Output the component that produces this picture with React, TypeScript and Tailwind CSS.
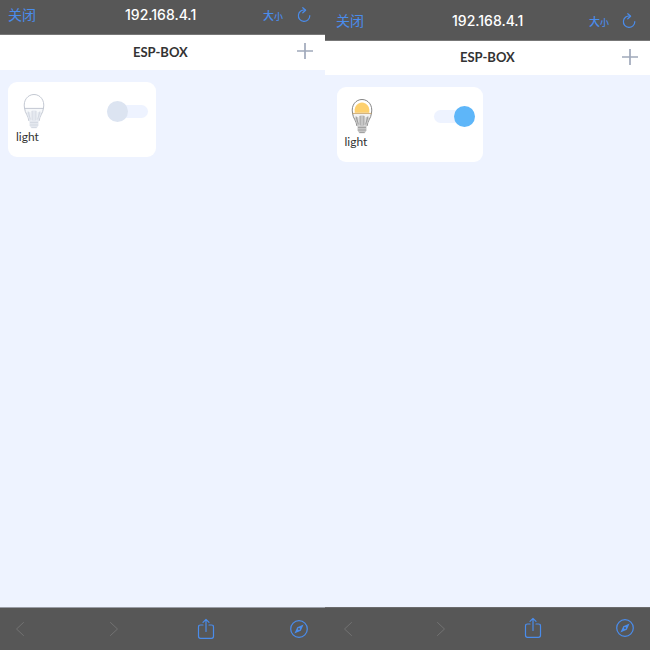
function Refresh() {
  return (
    <svg className="block h-4 w-4 shrink-0" viewBox="0 0 16 16" fill="none" stroke="#4a8ceb" strokeWidth="1.200" strokeLinecap="round" strokeLinejoin="round">
      <path d="M9.200 3.100A5.700 5.700 0 1 0 13.800 8.700" />
      <path d="M6.800 .7l2.800 2.500-2.800 2.600" />
    </svg>
  );
}

function Bulb({ on }: { on: boolean }) {
  const line = on ? "#777" : "#bcc2cd";
  const body = on ? "#c6c6c6" : "#e4e8ef";
  const fin = on ? "#929292" : "#cfd4de";
  return (
    <svg className="block h-9 w-6" viewBox="0 0 24 36" fill="none">
      <path d="M2.500 15C1.700 13 2 11 2 10a10 9 0 0 1 20 0c0 2-.3 3.500-.8 5z" fill="#fff" />
      {on && <path d="M4.900 14.800a7.400 8 0 1 1 14.200 0z" fill="#fdd06e" />}
      <path d="M2.500 15.500h19c-.8 4-3.200 6.500-4.200 12.500l-1.800 1H8.500l-1.800-1C5.700 22 3.300 19.500 2.500 15.500z" fill={on ? "#f2f2f2" : "#f6f8fa"} />
      <path d="M7 28c-.8-6-4-7.500-4.500-13C1 7 6 1.500 12 1.500S23 7 21.500 15c-.5 5.500-3.700 7-4.500 13" stroke={line} strokeWidth=".9" />
      <path d="M2.600 15.400h18.800" stroke={on ? "#cba362" : line} strokeWidth=".9" />
      <path d="M6 18.500l2.500 1V28h-1L5 21zM18 18.500l-2.500 1V28h1l2.500-7zM9.800 17.500h4.400V28H9.800z" fill={body} />
      <path d="M6 18.500l2.500 8M18 18.500l-2.500 8M10 18v9M14 18v9" stroke={fin} strokeWidth=".8" />
      <path d="M7.500 27.500h9v5l-1.800 2.800H9.300l-1.800-2.800z" fill={body} />
      <path d="M8 29.500h8M8 32h8M9.500 34.500h5" stroke={fin} strokeWidth=".7" />
    </svg>
  );
}

function Chevron({ right = false }: { right?: boolean }) {
  return (
    <svg className="block h-4 w-2.5" viewBox="0 0 10 16" fill="none" stroke="#727272" strokeWidth="1" strokeLinecap="round" strokeLinejoin="round">
      <path d={right ? "M1.500 1.500L8.500 8l-7 6.500" : "M8.500 1.500L1.500 8l7 6.500"} />
    </svg>
  );
}

function Share() {
  return (
    <svg className="block h-[22px] w-[18px]" viewBox="0 0 18 22" fill="none" stroke="#4a8ceb" strokeWidth="1.200" strokeLinecap="round" strokeLinejoin="round">
      <path d="M6 7H3.500Q1.500 7 1.500 9v9.300q0 2 2 2h11q2 0 2-2V9q0-2-2-2H12M9 13.500V1.500M6 4.300l3-3 3 3" />
    </svg>
  );
}

function Compass() {
  return (
    <svg className="block h-5 w-5" viewBox="0 0 20 20" fill="none" stroke="#4a8ceb" strokeWidth="1.250">
      <circle cx="10" cy="10" r="8.300" />
      <path fillRule="evenodd" d="M14.600 5.400L8.300 8.200l-2.900 6.400 6.400-2.900zM11 10a1 1 0 1 1-2 0 1 1 0 0 1 2 0z" fill="#4a8ceb" stroke="none" />
    </svg>
  );
}

function Phone({ on }: { on: boolean }) {
  return (
    <section className="flex h-[650px] w-[325px] flex-col overflow-hidden bg-[#eef3ff]">
      <header className={`flex shrink-0 items-start border-b border-[#777] bg-[#575757] text-[#4a8ceb] ${on ? "h-[41px] pt-[13px] pl-[11px]" : "h-[35px] pt-[7px] pl-2"}`}>
        <span className="-mt-px w-7 font-['Noto_Sans_CJK_SC',sans-serif] text-[14px] leading-4 font-normal whitespace-nowrap">关闭</span>
        <span className={`w-[72px] font-[Inter,sans-serif] text-[14px] leading-4 font-medium whitespace-nowrap text-white ${on ? "ml-[88px]" : "ml-[89px]"}`}>192.168.4.1</span>
        <span className={`flex w-5 items-baseline font-['Noto_Sans_CJK_SC',sans-serif] font-medium whitespace-nowrap ${on ? "ml-[65px]" : "ml-[66px]"}`}>
          <span className="text-[11px] leading-4">大</span><span className="text-[9px] leading-3">小</span>
        </span>
        <div className={on ? "ml-3" : "ml-[13px]"}><Refresh /></div>
      </header>
      <div className={`flex shrink-0 items-center bg-white pb-[2px] ${on ? "h-[34px] pl-[135px]" : "h-[35px] pl-[133px]"}`}>
        <h1 className="w-14 font-[Lato,sans-serif] text-[13px] leading-4 font-bold whitespace-nowrap text-[#333]">ESP-BOX</h1>
        <svg className={`block h-[18px] w-[18px] ${on ? "ml-[105px]" : "-mt-px ml-[106.500px]"}`} viewBox="0 0 18 18" fill="none" stroke="#a0a9bb" strokeWidth="1.700">
          <path d="M9 1v16M1 9h16" />
        </svg>
      </div>
      <main className={`flex-1 ${on ? "pt-3 pl-[11.500px]" : "pt-[11.500px] pl-2"}`}>
        <div className={`flex items-start justify-between rounded-[9px] bg-white pr-2 pl-2 ${on ? "h-[75px] w-[146px] pt-[11px]" : "h-[75.500px] w-[148px] pt-[11.500px]"}`}>
          <div>
            <div className={on ? "pl-[5px]" : "pl-1.5"}><Bulb on={on} /></div>
            <div className="pt-px font-[Lato,sans-serif] text-[12px] leading-[14px] text-[#333]">light</div>
          </div>
          <div className="mt-2 flex h-[21px] w-[41px] items-center">
            <div className={`flex h-[13px] w-full items-center rounded-full bg-[#eef3ff] ${on ? "justify-end" : ""}`}>
              <span className={`block h-[21px] w-[21px] shrink-0 rounded-full ${on ? "bg-[#5eb6f9]" : "bg-[#dce4f1]"}`} />
            </div>
          </div>
        </div>
      </main>
      <footer className={`flex h-[43px] shrink-0 items-center border-t bg-[#575757] ${on ? "border-[#6b6b6d] pl-[18px]" : "border-[#9a9da5] pl-[15px]"}`}>
        <Chevron />
        <div className={on ? "ml-[83px]" : "ml-[84px]"}><Chevron right /></div>
        <div className={on ? "-mt-[3px] ml-[78px]" : "-mt-px ml-[78px]"}><Share /></div>
        <div className={on ? "-mt-[2px] ml-[73px]" : "ml-[74px]"}><Compass /></div>
      </footer>
    </section>
  );
}

export default function App() {
  return (
    <div className="flex h-[650px] w-[650px] overflow-hidden">
      <Phone on={false} />
      <Phone on />
    </div>
  );
}
